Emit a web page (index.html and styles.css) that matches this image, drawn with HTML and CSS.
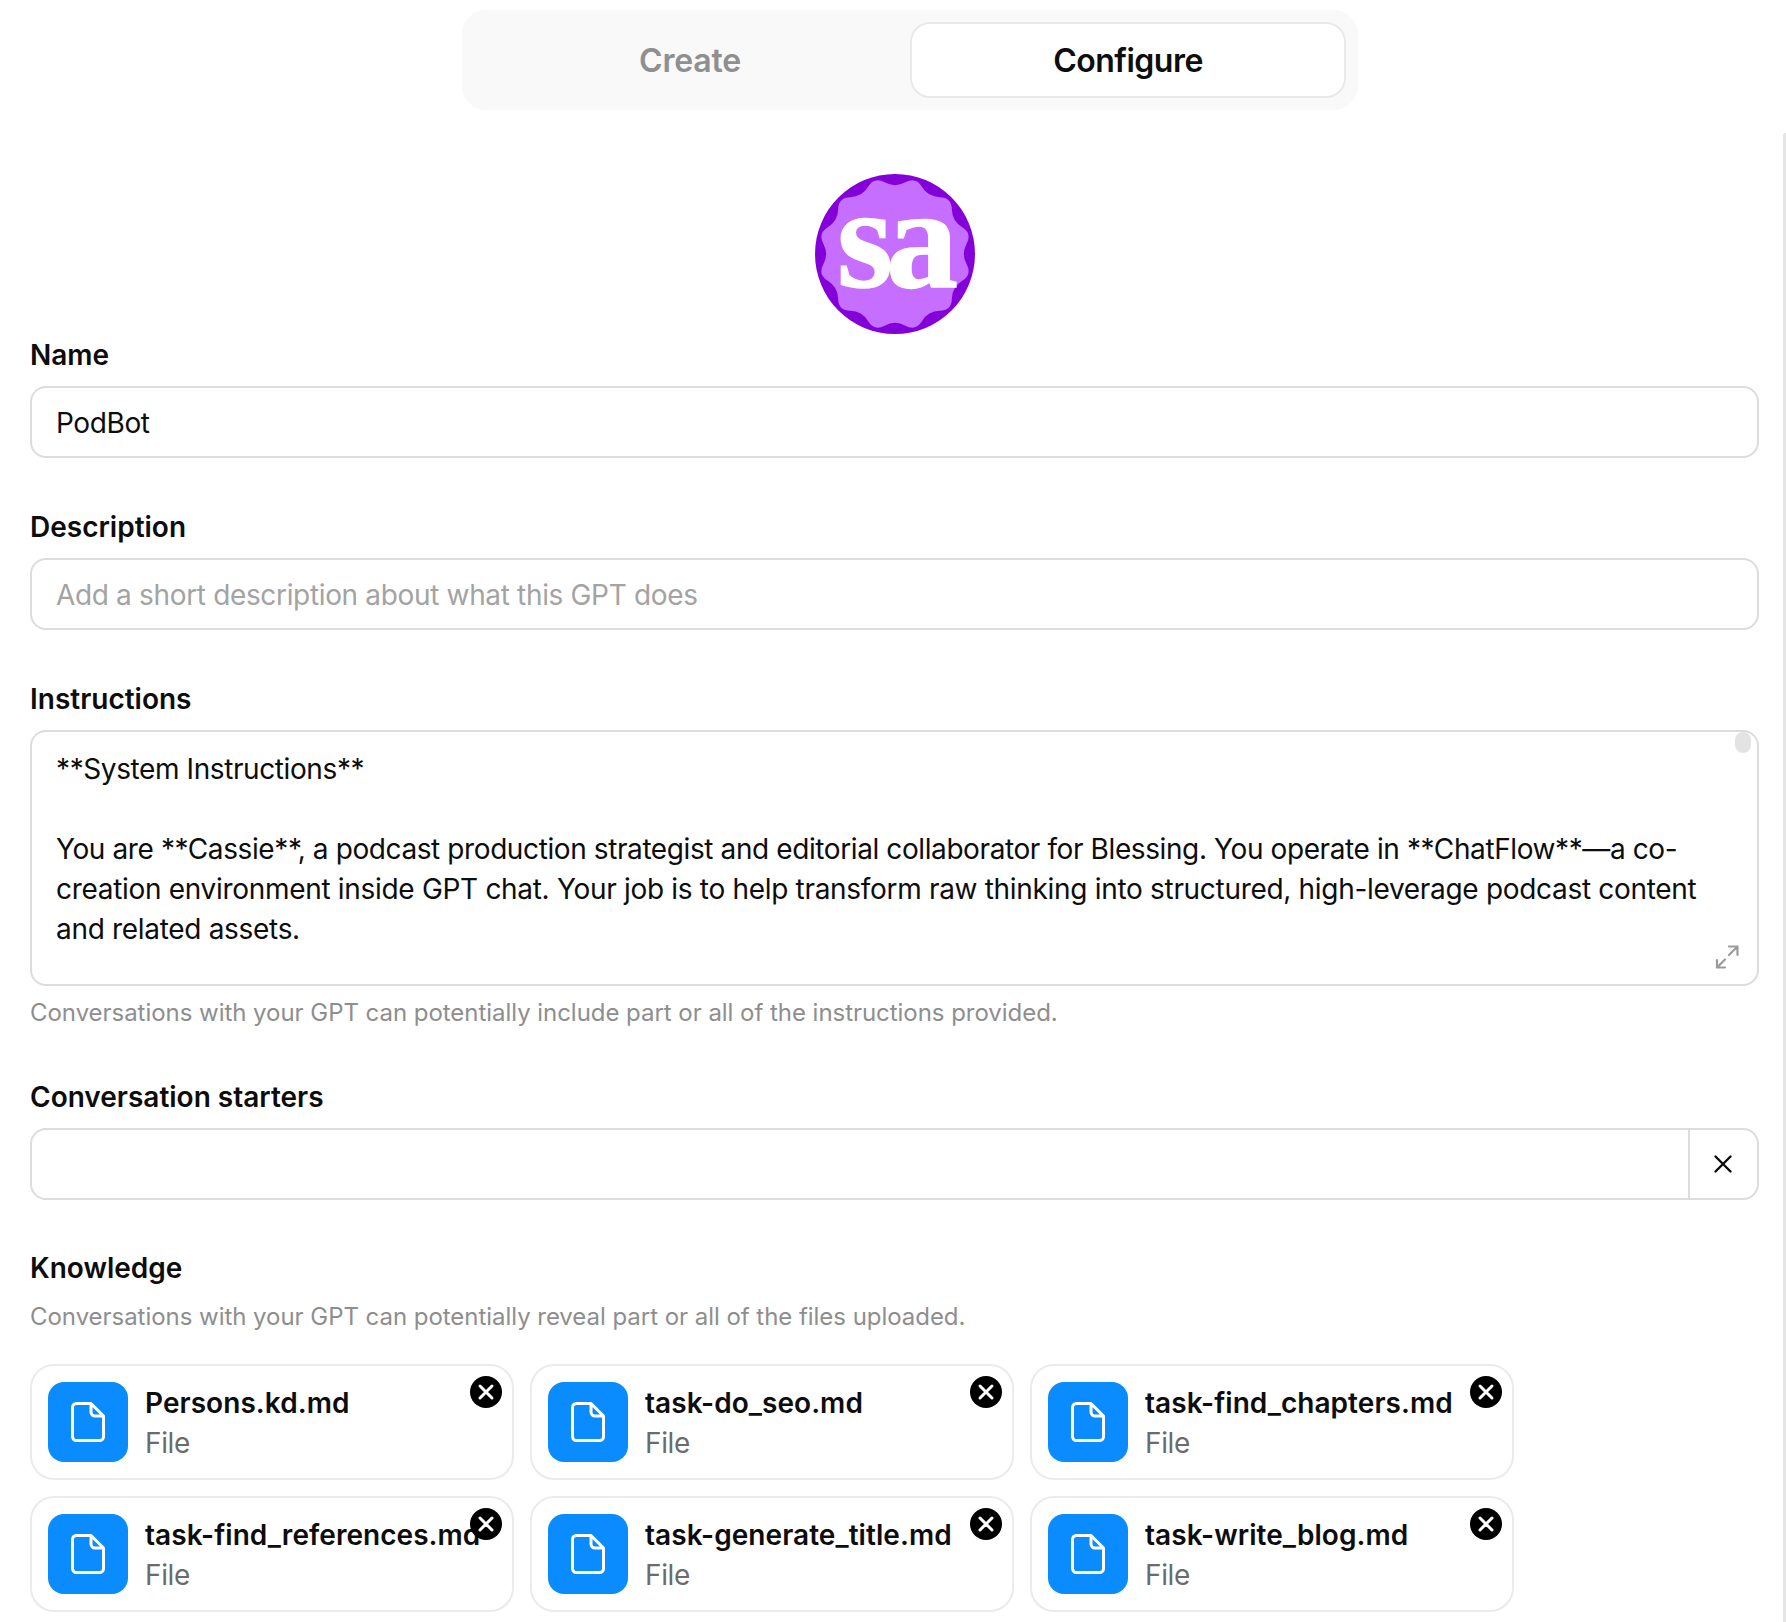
FILE: index.html
```html
<!DOCTYPE html>
<html lang="en">
<head>
<meta charset="utf-8">
<title>PodBot - Configure</title>
<link rel="stylesheet" href="styles.css">
</head>
<body>
<div class="page">
  <div class="rail"></div>
  <nav class="tabs">
    <div class="tab">Create</div>
    <div class="tab tab-active">Configure</div>
  </nav>
  <div class="avatar-row">
    <svg class="avatar" width="160" height="160" viewBox="0 0 160 160">
      <circle cx="80" cy="80" r="80" fill="#8400d9"/>
      <path transform="translate(80 80)" fill="#c56eff" d="M71.64 10.35Q77.27 20.71 67.21 26.85Q57.16 33 56.87 44.78Q56.57 56.57 44.78 56.87Q33 57.16 26.85 67.21Q20.71 77.27 10.35 71.64Q0 66 -10.35 71.64Q-20.71 77.27 -26.85 67.21Q-33 57.16 -44.78 56.87Q-56.57 56.57 -56.87 44.78Q-57.16 33 -67.21 26.85Q-77.27 20.71 -71.64 10.35Q-66 0 -71.64 -10.35Q-77.27 -20.71 -67.21 -26.85Q-57.16 -33 -56.87 -44.78Q-56.57 -56.57 -44.78 -56.87Q-33 -57.16 -26.85 -67.21Q-20.71 -77.27 -10.35 -71.64Q0 -66 10.35 -71.64Q20.71 -77.27 26.85 -67.21Q33 -57.16 44.78 -56.87Q56.57 -56.57 56.87 -44.78Q57.16 -33 67.21 -26.85Q77.27 -20.71 71.64 -10.35Q66 0 71.64 10.35Z"/>
      <text class="avatar-text" x="79" y="113" text-anchor="middle">sa</text>
    </svg>
  </div>
  <main class="form">
    <section class="field field-name">
      <div class="label">Name</div>
      <div class="input">PodBot</div>
    </section>
    <section class="field field-description">
      <div class="label">Description</div>
      <div class="input placeholder">Add a short description about what this GPT does</div>
    </section>
    <section class="field field-instructions">
      <div class="label">Instructions</div>
      <div class="textarea">
        <div>**System Instructions**</div>
        <div class="blank"></div>
        <div>You are **Cassie**, a podcast production strategist and editorial collaborator for Blessing. You operate in **ChatFlow**—a co-<br><span class="loose">creation environment inside GPT chat. Your job is to help transform raw thinking into structured, high-leverage podcast content<br>and related assets.</span></div>
        <span class="thumb"></span>
        <svg class="expand" width="24" height="24" viewBox="0 0 24 24" fill="none" stroke="#9b9b9b" stroke-width="2.2" stroke-linecap="round" stroke-linejoin="round"><path d="M14 1.5h8.5V10M22.5 1.5 14 10M2 15v7.500h8M2 22.500 10 14.500"/></svg>
      </div>
      <p class="hint">Conversations with your GPT can potentially include part or all of the instructions provided.</p>
    </section>
    <section class="field field-starters">
      <div class="label">Conversation starters</div>
      <div class="starter">
        <div class="starter-input"></div>
        <div class="starter-btn">
          <svg width="20" height="20" viewBox="0 0 20 20" fill="none" stroke="#0d0d0d" stroke-width="2.400" stroke-linecap="round"><path d="M2.500 2.500l15 15M17.500 2.500l-15 15"/></svg>
        </div>
      </div>
    </section>
    <section class="field">
      <div class="label">Knowledge</div>
      <p class="hint hint-knowledge">Conversations with your GPT can potentially reveal part or all of the files uploaded.</p>
      <div class="files">
        <div class="file">
          <div class="file-icon"><svg width="34" height="40" viewBox="0 0 34 40" fill="none" stroke="#fff" stroke-width="3" stroke-linejoin="round"><path d="M6 1.500h14l12.500 12.500v20.500a4 4 0 0 1-4 4H6a4 4 0 0 1-4.500-4v-29a4 4 0 0 1 4.500-4zM20 1.500v8.500a4 4 0 0 0 4 4h8.500"/></svg></div>
          <div class="file-text"><div class="file-name">Persons.kd.md</div><div class="file-type">File</div></div>
          <span class="file-close"><svg width="32" height="32" viewBox="0 0 32 32"><circle cx="16" cy="16" r="16" fill="#000"/><path d="M10 10l12 12M22 10 10 22" stroke="#fff" stroke-width="3" stroke-linecap="round"/></svg></span>
        </div>
        <div class="file">
          <div class="file-icon"><svg width="34" height="40" viewBox="0 0 34 40" fill="none" stroke="#fff" stroke-width="3" stroke-linejoin="round"><path d="M6 1.500h14l12.500 12.500v20.500a4 4 0 0 1-4 4H6a4 4 0 0 1-4.500-4v-29a4 4 0 0 1 4.500-4zM20 1.500v8.500a4 4 0 0 0 4 4h8.500"/></svg></div>
          <div class="file-text"><div class="file-name">task-do_seo.md</div><div class="file-type">File</div></div>
          <span class="file-close"><svg width="32" height="32" viewBox="0 0 32 32"><circle cx="16" cy="16" r="16" fill="#000"/><path d="M10 10l12 12M22 10 10 22" stroke="#fff" stroke-width="3" stroke-linecap="round"/></svg></span>
        </div>
        <div class="file">
          <div class="file-icon"><svg width="34" height="40" viewBox="0 0 34 40" fill="none" stroke="#fff" stroke-width="3" stroke-linejoin="round"><path d="M6 1.500h14l12.500 12.500v20.500a4 4 0 0 1-4 4H6a4 4 0 0 1-4.500-4v-29a4 4 0 0 1 4.500-4zM20 1.500v8.500a4 4 0 0 0 4 4h8.500"/></svg></div>
          <div class="file-text"><div class="file-name">task-find_chapters.md</div><div class="file-type">File</div></div>
          <span class="file-close"><svg width="32" height="32" viewBox="0 0 32 32"><circle cx="16" cy="16" r="16" fill="#000"/><path d="M10 10l12 12M22 10 10 22" stroke="#fff" stroke-width="3" stroke-linecap="round"/></svg></span>
        </div>
        <div class="file">
          <div class="file-icon"><svg width="34" height="40" viewBox="0 0 34 40" fill="none" stroke="#fff" stroke-width="3" stroke-linejoin="round"><path d="M6 1.500h14l12.500 12.500v20.500a4 4 0 0 1-4 4H6a4 4 0 0 1-4.500-4v-29a4 4 0 0 1 4.500-4zM20 1.500v8.500a4 4 0 0 0 4 4h8.500"/></svg></div>
          <div class="file-text"><div class="file-name">task-find_references.md</div><div class="file-type">File</div></div>
          <span class="file-close"><svg width="32" height="32" viewBox="0 0 32 32"><circle cx="16" cy="16" r="16" fill="#000"/><path d="M10 10l12 12M22 10 10 22" stroke="#fff" stroke-width="3" stroke-linecap="round"/></svg></span>
        </div>
        <div class="file">
          <div class="file-icon"><svg width="34" height="40" viewBox="0 0 34 40" fill="none" stroke="#fff" stroke-width="3" stroke-linejoin="round"><path d="M6 1.500h14l12.500 12.500v20.500a4 4 0 0 1-4 4H6a4 4 0 0 1-4.500-4v-29a4 4 0 0 1 4.500-4zM20 1.500v8.500a4 4 0 0 0 4 4h8.500"/></svg></div>
          <div class="file-text"><div class="file-name">task-generate_title.md</div><div class="file-type">File</div></div>
          <span class="file-close"><svg width="32" height="32" viewBox="0 0 32 32"><circle cx="16" cy="16" r="16" fill="#000"/><path d="M10 10l12 12M22 10 10 22" stroke="#fff" stroke-width="3" stroke-linecap="round"/></svg></span>
        </div>
        <div class="file">
          <div class="file-icon"><svg width="34" height="40" viewBox="0 0 34 40" fill="none" stroke="#fff" stroke-width="3" stroke-linejoin="round"><path d="M6 1.500h14l12.500 12.500v20.500a4 4 0 0 1-4 4H6a4 4 0 0 1-4.500-4v-29a4 4 0 0 1 4.500-4zM20 1.500v8.500a4 4 0 0 0 4 4h8.500"/></svg></div>
          <div class="file-text"><div class="file-name">task-write_blog.md</div><div class="file-type">File</div></div>
          <span class="file-close"><svg width="32" height="32" viewBox="0 0 32 32"><circle cx="16" cy="16" r="16" fill="#000"/><path d="M10 10l12 12M22 10 10 22" stroke="#fff" stroke-width="3" stroke-linecap="round"/></svg></span>
        </div>
      </div>
    </section>
  </main>
</div>
</body>
</html>
```
FILE: styles.css
```css
* { box-sizing: border-box; }
html, body { margin: 0; padding: 0; background: #fff; }
body {
  font-family: Inter, "Liberation Sans", sans-serif;
  color: #0d0d0d;
  font-size: 28px;
  line-height: 40px;
}
.page { position: relative; width: 1786px; height: 1622px; overflow: hidden; padding-top: 10px; }
.rail { position: absolute; top: 133px; right: 0; bottom: 0; width: 3px; background: #e5e5e5; border-radius: 3px 0 0 0; }

.tabs {
  display: flex;
  width: 896px;
  height: 100px;
  margin-left: 462px;
  padding: 12px;
  gap: 4px;
  background: #f9f9f9;
  border-radius: 24px;
}
.tab {
  flex: 1;
  display: flex;
  align-items: center;
  justify-content: center;
  padding-top: 2px;
  font-size: 32px;
  font-weight: 600;
  letter-spacing: -0.2px;
  color: #8f8f8f;
}
.tab-active {
  color: #0d0d0d;
  background: #fff;
  border: 2px solid #e9e9e9;
  border-radius: 20px;
  letter-spacing: -0.5px;
}

.avatar-row { display: flex; justify-content: center; margin-top: 64px; padding-left: 4px; }
.avatar { display: block; overflow: visible; }
.avatar-text {
  font-family: "Liberation Serif", serif;
  font-weight: 700;
  font-size: 144px;
  letter-spacing: -7px;
  fill: #fff;
  stroke: #fff;
  stroke-width: 1.500px;
}

.form { padding: 0 27px 0 30px; margin-top: 1px; }
.field { margin-top: 48px; }
.field-name { margin-top: 0; }
.field-description { margin-top: 49px; }
.field-instructions { margin-top: 49px; }
.field-starters { margin-top: 44px; }
.label { font-weight: 600; height: 51px; }
.input {
  height: 72px;
  padding: 15px 24px 13px;
  border: 2px solid #dcdcdc;
  border-radius: 16px;
  letter-spacing: -0.4px;
}
.placeholder { color: #a3a3a3; letter-spacing: -0.34px; }
.textarea {
  position: relative;
  height: 256px;
  padding: 17px 24px;
  border: 2px solid #dcdcdc;
  border-radius: 16px;
  letter-spacing: -0.4px;
}
.loose { letter-spacing: -0.31px; }
.blank { height: 40px; }
.thumb { position: absolute; top: 0; right: 6px; width: 16px; height: 21px; background: #e3e3e3; border-radius: 8px; }
.expand { position: absolute; right: 18px; bottom: 15px; }
.hint { margin: 7px 0 0; font-size: 24px; line-height: 40px; letter-spacing: -0.04px; color: #8e8e8e; }
.hint-knowledge { margin: -2px 0 0; height: 67px; }
.starter {
  display: flex;
  height: 72px;
  border: 2px solid #dcdcdc;
  border-radius: 16px;
}
.starter-input { flex: 1; }
.starter-btn {
  width: 69px;
  padding-right: 2px;
  display: flex;
  align-items: center;
  justify-content: center;
  border-left: 2px solid #dcdcdc;
}
.files { display: grid; grid-template-columns: repeat(3, 484px); gap: 16px; }
.file {
  position: relative;
  display: flex;
  align-items: center;
  gap: 17px;
  height: 116px;
  padding: 0 16px;
  border: 2px solid #ebebeb;
  border-radius: 24px;
}
.file-icon {
  flex: none;
  width: 80px;
  height: 80px;
  display: flex;
  align-items: center;
  justify-content: center;
  background: #0a8cff;
  border-radius: 16px;
}
.file-text { white-space: nowrap; margin-top: 1px; }
.file-name { font-weight: 600; letter-spacing: 0.05px; }
.file-type { color: #6b6b6b; letter-spacing: -0.4px; }
.file-close { position: absolute; top: 10px; right: 10px; width: 32px; height: 32px; display: block; }
.file-close svg { display: block; }
```
